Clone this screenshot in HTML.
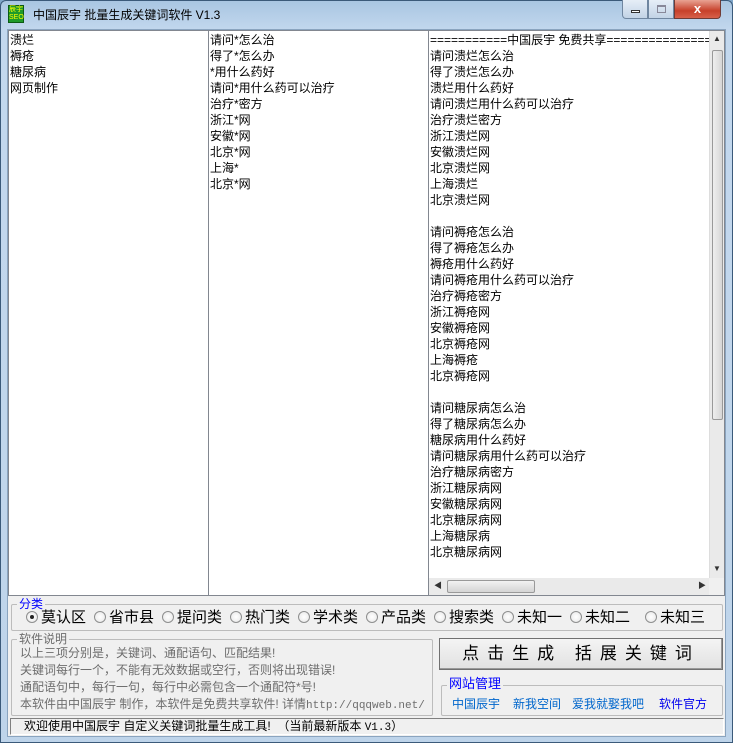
<!DOCTYPE html>
<html><head><meta charset="utf-8"><style>
*{margin:0;padding:0;box-sizing:border-box}
body{width:733px;height:743px;overflow:hidden;background:#7fa6c9;font-family:"Liberation Sans","Noto Sans CJK SC",sans-serif;font-size:12px;position:relative}
.a{position:absolute}
.frame{left:0;top:0;width:733px;height:743px;background:linear-gradient(180deg,#a9c6e2 0,#c3d8ee 30px,#bed4ea 100%);border:1px solid #3b5a7a;border-radius:6px 6px 0 0}
.client{left:7px;top:29px;width:719px;height:708px;background:#f0f0f0;border:1px solid #8aa4bf}
.ta{background:#fff;border:1px solid #828790;line-height:16px;white-space:pre;padding:1px 0 0 1px;overflow:hidden;font-size:12px;color:#000}
.grp{border:1px solid #bcbcbc;border-radius:2px}
.lg{background:#f0f0f0;padding:0 2px;font-size:12px;line-height:12px}
.rad{font-size:15px;line-height:16px;color:#000}
.rad i{display:inline-block;width:12px;height:12px;border-radius:50%;border:1px solid #8e8f8f;background:radial-gradient(circle,#fff 0,#e6e6e6 100%);vertical-align:-1px;margin-right:3px;position:relative}
.rad i.on:after{content:"";position:absolute;left:3px;top:3px;width:4px;height:4px;border-radius:50%;background:#222}
.gray{color:#6d6d6d;font-size:12px;line-height:17px;white-space:pre}
.lnk{color:#0066cc;font-size:12px}
</style></head><body>
<div class="a frame"></div>
<div class="a" style="left:8px;top:5px;width:16px;height:18px;background:#1f9a2a;color:#ff0;font-size:7px;line-height:8px;text-align:center;border:1px solid #0b5b14">辰宇<br>SEO</div>
<div class="a" style="left:33px;top:6px;font-size:12px;color:#000">中国辰宇 批量生成关键词软件 V1.3</div>
<div class="a" style="left:622px;top:0;width:26px;height:19px;border:1px solid #6f86a0;border-top:none;border-radius:0 0 0 4px;background:linear-gradient(#e6eef7,#c2d3e6)"><div class="a" style="left:8px;top:10px;width:9px;height:3px;background:#fff;border:1px solid #333"></div></div>
<div class="a" style="left:648px;top:0;width:26px;height:19px;border:1px solid #6f86a0;border-top:none;background:linear-gradient(#e6eef7,#c2d3e6)"><div class="a" style="left:8px;top:5px;width:9px;height:8px;border:1px solid #889;border-top-width:2px"></div></div>
<div class="a" style="left:674px;top:0;width:47px;height:19px;border:1px solid #6f3b36;border-top:none;border-radius:0 0 4px 0;background:linear-gradient(#e8a393,#c7402a 60%,#d7604a);color:#fff;font-weight:bold;text-align:center;font-size:13px;line-height:17px">x</div>
<div class="a client"></div>
<div class="a ta" style="left:8px;top:30px;width:201px;height:566px">溃烂
褥疮
糖尿病
网页制作</div>
<div class="a ta" style="left:208px;top:30px;width:221px;height:566px">请问*怎么治
得了*怎么办
*用什么药好
请问*用什么药可以治疗
治疗*密方
浙江*网
安徽*网
北京*网
上海*
北京*网</div>
<div class="a ta" style="left:428px;top:30px;width:297px;height:566px">===========中国辰宇 免费共享====================
请问溃烂怎么治
得了溃烂怎么办
溃烂用什么药好
请问溃烂用什么药可以治疗
治疗溃烂密方
浙江溃烂网
安徽溃烂网
北京溃烂网
上海溃烂
北京溃烂网

请问褥疮怎么治
得了褥疮怎么办
褥疮用什么药好
请问褥疮用什么药可以治疗
治疗褥疮密方
浙江褥疮网
安徽褥疮网
北京褥疮网
上海褥疮
北京褥疮网

请问糖尿病怎么治
得了糖尿病怎么办
糖尿病用什么药好
请问糖尿病用什么药可以治疗
治疗糖尿病密方
浙江糖尿病网
安徽糖尿病网
北京糖尿病网
上海糖尿病
北京糖尿病网</div>
<div class="a" style="left:709px;top:31px;width:15px;height:547px;background:#eaeaea;border-left:1px solid #ddd"></div>
<div class="a" style="left:712px;top:50px;width:11px;height:370px;background:linear-gradient(90deg,#eee,#d6d6d6);border:1px solid #999;border-radius:2px"></div>
<div class="a" style="left:713px;top:34px;font-size:8px;color:#333">▲</div>
<div class="a" style="left:713px;top:564px;font-size:8px;color:#333">▼</div>
<div class="a" style="left:429px;top:578px;width:280px;height:17px;background:#eaeaea"></div>
<div class="a" style="left:447px;top:580px;width:88px;height:13px;background:linear-gradient(#f2f2f2,#d4d4d4);border:1px solid #999;border-radius:2px"></div>
<div class="a" style="left:434px;top:580px;font-size:8px;color:#333">◀</div>
<div class="a" style="left:698px;top:580px;font-size:8px;color:#333">▶</div>
<div class="a" style="left:709px;top:578px;width:15px;height:17px;background:#f0f0f0"></div>

<div class="a grp" style="left:11px;top:604px;width:712px;height:27px"></div>
<div class="a lg" style="left:17px;top:598px;color:#0000ff">分类</div>
<div class="a rad" style="left:26px;top:610px"><i class="on"></i>莫认区</div>
<div class="a rad" style="left:94px;top:610px"><i></i>省市县</div>
<div class="a rad" style="left:162px;top:610px"><i></i>提问类</div>
<div class="a rad" style="left:230px;top:610px"><i></i>热门类</div>
<div class="a rad" style="left:298px;top:610px"><i></i>学术类</div>
<div class="a rad" style="left:366px;top:610px"><i></i>产品类</div>
<div class="a rad" style="left:434px;top:610px"><i></i>搜索类</div>
<div class="a rad" style="left:502px;top:610px"><i></i>未知一</div>
<div class="a rad" style="left:570px;top:610px"><i></i>未知二</div>
<div class="a rad" style="left:645px;top:610px"><i></i>未知三</div>

<div class="a grp" style="left:11px;top:639px;width:422px;height:77px"></div>
<div class="a lg" style="left:17px;top:633px;color:#6d6d6d">软件说明</div>
<div class="a gray" style="left:20px;top:645px">以上三项分别是，关键词、通配语句、匹配结果!
关键词每行一个，不能有无效数据或空行，否则将出现错误!
通配语句中，每行一句，每行中必需包含一个通配符*号!
本软件由中国辰宇 制作，本软件是免费共享软件! 详情<span style="font-family:'Liberation Mono',monospace;font-size:11px">http://qqqweb.net/</span></div>

<div class="a" style="left:439px;top:638px;width:284px;height:32px;background:linear-gradient(#f4f4f4,#e1e1e1);border:1px solid #707070;box-shadow:inset -1px -1px 0 #999;text-align:center;font-size:17px;line-height:30px;letter-spacing:8px">点击生成 括展关键词</div>

<div class="a grp" style="left:441px;top:685px;width:282px;height:31px"></div>
<div class="a lg" style="left:447px;top:678px;color:#0000ff;font-size:13px">网站管理</div>
<div class="a lnk" style="left:452px;top:695px">中国辰宇</div>
<div class="a lnk" style="left:513px;top:695px">新我空间</div>
<div class="a lnk" style="left:572px;top:695px">爱我就娶我吧</div>
<div class="a lnk" style="left:659px;top:695px;color:#0000ee">软件官方</div>

<div class="a" style="left:10px;top:718px;width:714px;height:17px;border-top:1px solid #808080;border-left:1px solid #808080;border-bottom:1px solid #fff;border-right:1px solid #fff;font-size:12px;line-height:15px;padding-left:13px;white-space:pre">欢迎使用中国辰宇 自定义关键词批量生成工具!  （当前最新版本 <span style="font-family:'Liberation Mono',monospace;font-size:11px">V1.3</span>）</div>
</body></html>
